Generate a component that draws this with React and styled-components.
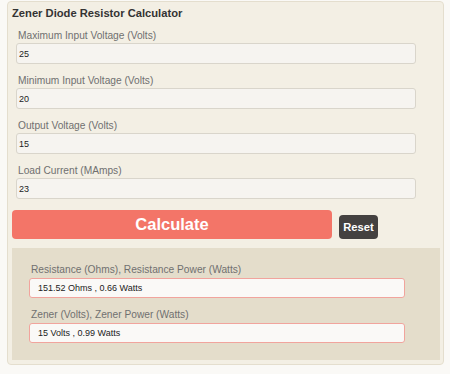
import React from "react";
import styled, { createGlobalStyle } from "styled-components";

const GlobalStyle = createGlobalStyle`
  * { box-sizing: border-box; }
  body {
    margin: 0;
    background: #faf9f6;
    font-family: "Liberation Sans", Arial, sans-serif;
  }
`;

const fields = [
  { label: "Maximum Input Voltage (Volts)", value: "25" },
  { label: "Minimum Input Voltage (Volts)", value: "20" },
  { label: "Output Voltage (Volts)", value: "15" },
  { label: "Load Current (MAmps)", value: "23" },
];

const results = [
  { label: "Resistance (Ohms), Resistance Power (Watts)", value: "151.52 Ohms , 0.66 Watts" },
  { label: "Zener (Volts), Zener Power (Watts)", value: "15 Volts , 0.99 Watts" },
];

const App = () => {
  return (
    <>
      <GlobalStyle />
      <Panel>
        <Title>Zener Diode Resistor Calculator</Title>
        <Form>
          {fields.map((f) => (
            <Field key={f.label}>
              <Label>{f.label}</Label>
              <Input defaultValue={f.value} />
            </Field>
          ))}
        </Form>
        <ButtonRow>
          <CalcButton>Calculate</CalcButton>
          <ResetButton>Reset</ResetButton>
        </ButtonRow>
        <Results>
          {results.map((r) => (
            <Field key={r.label} $gap={10}>
              <Label>{r.label}</Label>
              <ResultInput readOnly value={r.value} />
            </Field>
          ))}
        </Results>
      </Panel>
    </>
  );
};

export default App;

const Panel = styled.div`
  margin: 1px 0 0 7px;
  width: 437px;
  height: 364px;
  border: 1px solid #e4dece;
  border-radius: 4px;
  background: #f3efe4;
  padding: 0 4px 4px 4px;
  display: flex;
  flex-direction: column;
`;

const Title = styled.div`
  padding: 3px 0 0 0;
  font-size: 11.2px;
  line-height: 16px;
  font-weight: 700;
  color: #333;
`;

const Form = styled.div`
  padding-left: 4px;
  margin-top: 8px;
  display: flex;
  flex-direction: column;
`;

const Field = styled.div`
  display: flex;
  flex-direction: column;
  & + & {
    margin-top: ${({ $gap }) => ($gap ?? 10)}px;
  }
`;

const Label = styled.label`
  padding-left: 2px;
  font-size: 10.2px;
  line-height: 14px;
  color: #707070;
`;

const Input = styled.input`
  width: 400px;
  height: 21px;
  border: 1px solid #d9d5cb;
  border-radius: 3px;
  background: #f6f4f0;
  padding: 0 0 0 2px;
  font-family: "Liberation Sans", Arial, sans-serif;
  font-size: 9px;
  color: #222;
  outline: none;
`;

const ButtonRow = styled.div`
  display: flex;
  align-items: flex-end;
  gap: 7px;
  margin-top: 11px;
`;

const CalcButton = styled.button`
  width: 320px;
  height: 29px;
  border: none;
  border-radius: 4px;
  background: #f37568;
  color: #fff;
  font-family: "Liberation Sans", Arial, sans-serif;
  font-size: 16.5px;
  font-weight: 700;
  padding: 0;
`;

const ResetButton = styled.button`
  width: 39px;
  height: 24px;
  border: none;
  border-radius: 4px;
  background: #444140;
  color: #fff;
  font-family: "Liberation Sans", Arial, sans-serif;
  font-size: 11.2px;
  font-weight: 700;
  padding: 0;
`;

const Results = styled.div`
  margin-top: 9px;
  width: 428px;
  height: 112px;
  background: #e4ddcb;
  padding: 15px 0 0 17px;
  display: flex;
  flex-direction: column;
`;

const ResultInput = styled.input`
  margin-top: 1px;
  width: 376px;
  height: 20px;
  border: 1px solid #f1a49d;
  border-radius: 3px;
  background: #faf9f7;
  padding: 0 0 0 8px;
  font-family: "Liberation Sans", Arial, sans-serif;
  font-size: 9px;
  color: #222;
  outline: none;
`;
